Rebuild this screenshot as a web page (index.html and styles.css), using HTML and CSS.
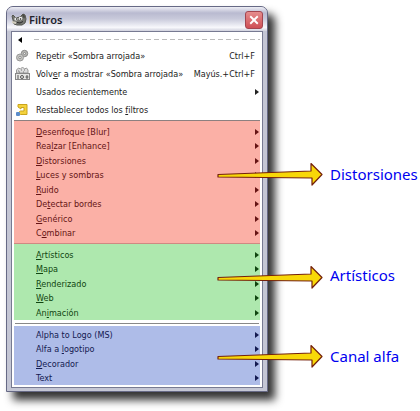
FILE: index.html
```html
<!DOCTYPE html>
<html lang="es">

<head>
    <meta charset="UTF-8">
    <meta name="viewport" content="width=device-width, initial-scale=1.0">
    <title>Filtros</title>
    <link rel="stylesheet" href="styles.css">
</head>

<body>
    <svg class="defs" width="0" height="0" aria-hidden="true">
        <symbol id="arrow" viewBox="0 0 108 24">
            <path d="M2 12.500 L95 9 L95 1.500 L106 12.500 L96 23 L96 16 L2 15Z" fill="#f8d808" stroke="#74200c" stroke-width="1.200" stroke-linejoin="round" />
        </symbol>
    </svg>

    <main class="window">
        <header class="title-bar">
            <svg class="title-icon" viewBox="0 0 16 14" width="16" height="14">
                <path d="M1 3l1-1 3 3 4-1 3-3 2 1 1 4-1 4-3 2H6L3 11 2 7z" fill="#777872" stroke="#55564f" />
                <path d="M11 2l2-1 1 3-1 2z" fill="#4a4b46" />
                <circle cx="5" cy="6" r="1.600" fill="#f4f4f4" />
                <circle cx="9.500" cy="5.500" r="1.800" fill="#f4f4f4" />
                <circle cx="5.500" cy="6" r=".7" fill="#111" />
                <circle cx="9.500" cy="6" r=".8" fill="#111" />
                <path d="M6 9.500q3 1.500 6-1" fill="none" stroke="#292929" />
                <path d="M1 9l4 1" stroke="#d5d0c2" stroke-width="2" />
            </svg>
            <h1>Filtros</h1>
            <button class="close-button" aria-label="Cerrar">
                <svg viewBox="0 0 17 17" width="17" height="17">
                    <path d="M4.500 4.500l8 8m0-8l-8 8" stroke="#fff" stroke-width="2" />
                </svg>
            </button>
        </header>

        <div class="menu">
            <div class="tear-off"></div>

            <div class="commands">
                <button class="command">
                    <svg class="icon" viewBox="0 0 16 16" width="16" height="16">
                        <circle cx="10.500" cy="5.500" r="3.200" fill="#b8b8b4" stroke="#888" />
                        <circle cx="6" cy="9.500" r="3.500" fill="#c4c4c0" stroke="#999" />
                        <circle cx="6" cy="9.500" r="1.200" fill="#eee" stroke="#777" stroke-width=".7" />
                        <circle cx="10.500" cy="5.500" r="1" fill="#eee" stroke="#777" stroke-width=".7" />
                    </svg>
                    <span>Re<u>p</u>etir «Sombra arrojada»</span>
                    <kbd>Ctrl+F</kbd>
                </button>
                <button class="command">
                    <svg class="icon" viewBox="0 0 16 16" width="16" height="16">
                        <path d="M2.500 7V4l2-2 2 1 2-2 2 2 2-1 1.500 2v3z" fill="#ddd" stroke="#999" />
                        <path d="M4 5h1m2-1h1m2 0h1M5 6h1m3 0h1" stroke="#777" />
                        <rect x="1.500" y="7.500" width="14" height="6" fill="#e6e6e4" stroke="#888" />
                        <path d="M4 9v4m9-4v4m-1.500-2h3" stroke="#555" />
                        <circle cx="8" cy="11" r="1.500" fill="none" stroke="#555" />
                    </svg>
                    <span>Volv<u>e</u>r a mostrar «Sombra arrojada»</span>
                    <kbd>Mayús.+Ctrl+F</kbd>
                </button>
                <button class="command submenu">Usados recientemente</button>
                <button class="command">
                    <svg class="icon" viewBox="0 0 16 16" width="16" height="16">
                        <path d="M4 2.500h9v10H6.500L4.500 10.500 6.500 9h3.500V5.500H7V7L4 5z" fill="#f4d23c" stroke="#c9a41c" stroke-linejoin="round" />
                        <rect x="2" y="10" width="4" height="4" rx="1" fill="#5b8dcc" />
                    </svg>
                    <span>Restablecer todos los <u>f</u>iltros</span>
                </button>
            </div>

            <section class="group red">
                <button class="submenu"><span><u>D</u>esenfoque [Blur]</span></button>
                <button class="submenu"><span>Rea<u>l</u>zar [Enhance]</span></button>
                <button class="submenu"><span><u>D</u>istorsiones</span></button>
                <button class="submenu"><span><u>L</u>uces y sombras</span></button>
                <button class="submenu"><span><u>R</u>uido</span></button>
                <button class="submenu"><span>De<u>t</u>ectar bordes</span></button>
                <button class="submenu"><span><u>G</u>enérico</span></button>
                <button class="submenu"><span>C<u>o</u>mbinar</span></button>
                <div class="callout">
                    <svg viewBox="0 0 108 24" width="108" height="24"><use href="#arrow" /></svg>
                    <span>Distorsiones</span>
                </div>
            </section>

            <section class="group green">
                <button class="submenu"><span><u>A</u>rtísticos</span></button>
                <button class="submenu"><span><u>M</u>apa</span></button>
                <button class="submenu"><span><u>R</u>enderizado</span></button>
                <button class="submenu"><span><u>W</u>eb</span></button>
                <button class="submenu"><span>An<u>i</u>mación</span></button>
                <div class="callout">
                    <svg viewBox="0 0 108 24" width="108" height="24"><use href="#arrow" /></svg>
                    <span>Artísticos</span>
                </div>
            </section>

            <hr>

            <section class="group blue">
                <button class="submenu"><span>Alpha to Logo (MS)</span></button>
                <button class="submenu"><span>Alfa a <u>l</u>ogotipo</span></button>
                <button class="submenu"><span><u>D</u>ecorador</span></button>
                <button class="submenu"><span>Text</span></button>
                <div class="callout">
                    <svg viewBox="0 0 108 24" width="108" height="24"><use href="#arrow" /></svg>
                    <span>Canal alfa</span>
                </div>
            </section>
        </div>
    </main>
</body>

</html>
```

FILE: styles.css
```css
* {
    box-sizing: border-box;
}

body {
    min-height: 100vh;
    margin: 0;
    padding: 6px;
    background-color: #fff;
    font-family: "DejaVu Sans Condensed", "DejaVu Sans", sans-serif;
    font-size: 9px;
    overflow-x: hidden;
}

.defs {
    position: absolute;
}

.window {
    width: 64%;
    min-width: 262px;
    max-width: 262px;
    padding: 0 4px 3px;
    border: 1px solid #666985;
    border-radius: 7px 7px 0 0;
    background-color: #c4c6d4;
    box-shadow: 7px 8px 9px #333;
}

.title-bar {
    display: flex;
    align-items: center;
    gap: 2px;
    height: 24px;
    margin: 0 -4px;
    padding: 2px 4px 0;
    border-radius: 6px 6px 0 0;
    background: linear-gradient(#eeeef5, #b9bad0 25%, #c9cadb 50%, #f8f8fc 85%, #d0d1dd);
}

.title-bar h1 {
    flex: 1;
    margin: 0;
    font-family: "Noto Sans", sans-serif;
    font-size: 11px;
    font-weight: 600;
    line-height: 16px;
    color: #22222c;
}

.close-button {
    width: 18px;
    height: 18px;
    padding: 0;
    border: 1px solid #a34550;
    border-radius: 3px;
    background: linear-gradient(#e58d8d, #cf4f55);
}

.close-button svg {
    display: block;
    width: 100%;
    height: 100%;
}

.menu {
    padding: 0 2px 2px;
    border: 1px solid #777a92;
    background-color: #fff;
}

.tear-off {
    display: flex;
    align-items: center;
    gap: 12px;
    height: 15px;
    padding-left: 4px;
}

.tear-off::before {
    content: "";
    border: 3px solid transparent;
    border-right: 4px solid #000;
    border-left: 0;
}

.tear-off::after {
    content: "";
    flex: 1;
    height: 1px;
    background: repeating-linear-gradient(90deg, #bbb 0 5px, transparent 5px 8px);
}

.menu button {
    border: 0;
    background: none;
    color: #222;
    font: inherit;
    text-align: left;
}

.menu u {
    text-underline-offset: 1px;
}

.commands {
    padding-bottom: 1px;
}

.menu .command {
    position: relative;
    display: flex;
    align-items: center;
    justify-content: space-between;
    width: 100%;
    height: 18px;
    padding: 0 5px 0 22px;
    white-space: nowrap;
}

.icon {
    position: absolute;
    left: 0;
}

.submenu::after {
    content: "";
    border: 3px solid transparent;
    border-left: 4px solid currentColor;
    border-right: 0;
}

.menu .command.submenu {
    padding-right: 1px;
}

kbd {
    font: inherit;
}

.group {
    position: relative;
}

.group .submenu {
    display: flex;
    align-items: center;
    justify-content: space-between;
    width: 100%;
    height: 15px;
    padding: 0 1px 0 22px;
}

.group .submenu:nth-child(even) {
    height: 14px;
}

.red {
    padding: 3px 0;
    border-top: 1px solid #8d8080;
    border-bottom: 1px solid #cf8982;
    background-color: #fbb0a6;
}

.menu .red button {
    color: #651414;
}

.green {
    padding-top: 3px;
    background-color: #aee8ae;
}

.menu .green button {
    color: #104510;
}

.blue {
    padding-top: 1px;
    background-color: #aebce8;
}

.menu .blue button {
    color: #141a50;
}

hr {
    margin: 3px 1px 2px;
    border: 0;
    border-top: 1px solid #888;
}

/* labels pointing into each group, drawn over the window edge */
.callout {
    position: absolute;
    top: 50%;
    left: calc(100% - 44px);
    display: flex;
    align-items: center;
    gap: 6px;
    height: 24px;
    margin-top: -20px;
    color: #0000f0;
    font-family: "Noto Sans", sans-serif;
    font-size: 15px;
    line-height: 20px;
    white-space: nowrap;
}

.green .callout {
    align-items: flex-start;
    margin-top: -17px;
}

.blue .callout {
    margin-top: -12px;
}
```
